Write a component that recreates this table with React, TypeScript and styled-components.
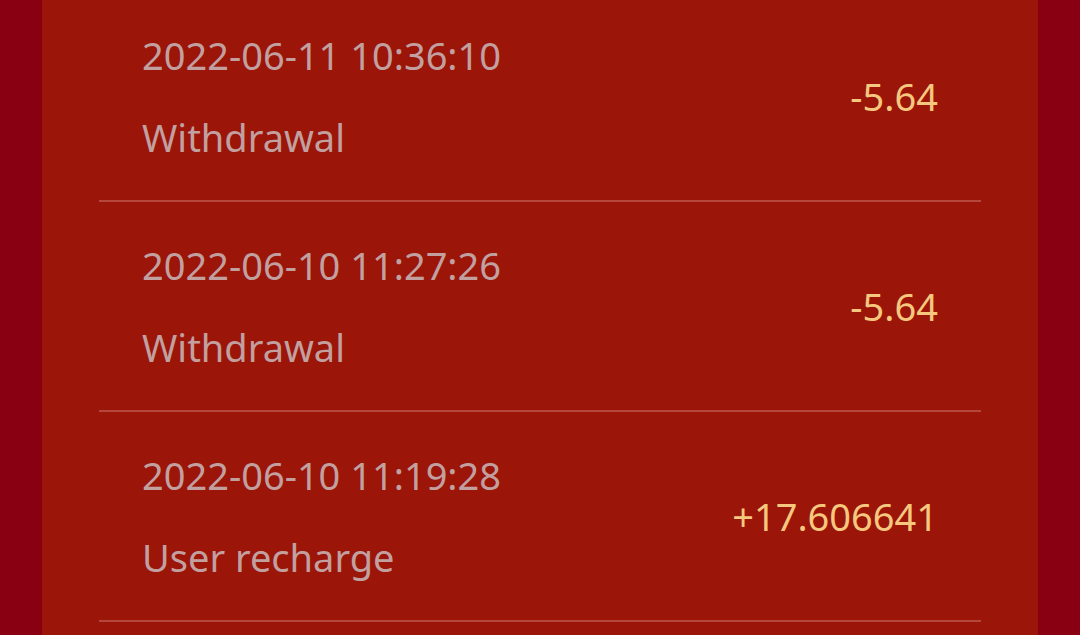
import React from 'react'
import styled, { createGlobalStyle } from 'styled-components'

const GlobalStyle = createGlobalStyle`
  html, body {
    margin: 0;
    padding: 0;
    background: #8a0013;
    font-family: "Noto Sans", "Open Sans", sans-serif;
    overflow: hidden;
  }
`

const Page = styled.div`
  height: 635px;
  padding: 0 42px;
  overflow: hidden;
`

const Panel = styled.div`
  display: flow-root;
  background: #9b1509;
  height: 100%;
  padding: 0 57px;
`

// list is scrolled a few px up
const List = styled.div`
  margin-top: -8px;
`

const Row = styled.div`
  display: flex;
  align-items: center;
  justify-content: space-between;
  height: 208px;
  padding: 0 43px;
  border-bottom: 2px solid #b5463b;
`

const Info = styled.div`
  display: flex;
  flex-direction: column;
  gap: 30px;
`

const Line = styled.div`
  color: #c2a0a0;
  font-size: 38px;
  line-height: 52px;
`

const Amount = styled.div<{ positive?: boolean }>`
  color: #f6c77e;
  font-size: 38px;
  line-height: 52px;
`

const records = [
  { time: '2022-06-11 10:36:10', type: 'Withdrawal', amount: '-5.64' },
  { time: '2022-06-10 11:27:26', type: 'Withdrawal', amount: '-5.64' },
  { time: '2022-06-10 11:19:28', type: 'User recharge', amount: '+17.606641' },
]

const App = () => {
  return (
    <>
      <GlobalStyle />
      <Page>
        <Panel>
          <List>
            {records.map((r) => (
              <Row key={r.time}>
                <Info>
                  <Line>{r.time}</Line>
                  <Line>{r.type}</Line>
                </Info>
                <Amount positive={r.amount.startsWith('+')}>{r.amount}</Amount>
              </Row>
            ))}
          </List>
        </Panel>
      </Page>
    </>
  )
}

export default App
